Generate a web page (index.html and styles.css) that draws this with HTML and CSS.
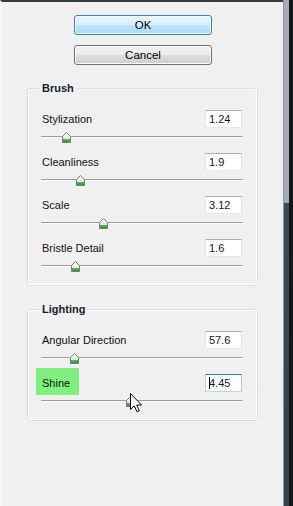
FILE: index.html
```html
<!DOCTYPE html>
<html>
<head>
<meta charset="utf-8">
<link rel="stylesheet" href="styles.css">
</head>
<body>
<div class="panel">
  <div class="buttons">
    <button class="btn btn-default">OK</button>
    <button class="btn">Cancel</button>
  </div>

  <fieldset class="group">
    <legend class="group-title">Brush</legend>
    <div class="rows">
      <div class="row">
        <div class="row-head"><span class="label">Stylization</span><span class="field">1.24</span></div>
        <div class="slider"><div class="track"></div><svg class="thumb" style="left:21px" width="9" height="11" viewBox="0 0 9 11"><defs><linearGradient id="g1" x1="0" y1="0" x2="0" y2="1"><stop offset="0" stop-color="#fdfdfd"/><stop offset="0.68" stop-color="#e2e4e2"/><stop offset="0.69" stop-color="#4cbc52"/><stop offset="1" stop-color="#2b8a31"/></linearGradient></defs><path d="M4.5 0.5 L8.5 4.5 L8.5 10.5 L0.5 10.5 L0.5 4.5 Z" fill="url(#g1)" stroke="#7a7a7a"/></svg></div>
      </div>
      <div class="row">
        <div class="row-head"><span class="label">Cleanliness</span><span class="field">1.9</span></div>
        <div class="slider"><div class="track"></div><svg class="thumb" style="left:35px" width="9" height="11" viewBox="0 0 9 11"><path d="M4.5 0.5 L8.5 4.5 L8.5 10.5 L0.5 10.5 L0.5 4.5 Z" fill="url(#g1)" stroke="#7a7a7a"/></svg></div>
      </div>
      <div class="row">
        <div class="row-head"><span class="label">Scale</span><span class="field">3.12</span></div>
        <div class="slider"><div class="track"></div><svg class="thumb" style="left:58px" width="9" height="11" viewBox="0 0 9 11"><path d="M4.5 0.5 L8.5 4.5 L8.5 10.5 L0.5 10.5 L0.5 4.5 Z" fill="url(#g1)" stroke="#7a7a7a"/></svg></div>
      </div>
      <div class="row">
        <div class="row-head"><span class="label">Bristle Detail</span><span class="field">1.6</span></div>
        <div class="slider"><div class="track"></div><svg class="thumb" style="left:30px" width="9" height="11" viewBox="0 0 9 11"><path d="M4.5 0.5 L8.5 4.5 L8.5 10.5 L0.5 10.5 L0.5 4.5 Z" fill="url(#g1)" stroke="#7a7a7a"/></svg></div>
      </div>
    </div>
  </fieldset>

  <fieldset class="group">
    <legend class="group-title">Lighting</legend>
    <div class="rows">
      <div class="row">
        <div class="row-head"><span class="label">Angular Direction</span><span class="field">57.6</span></div>
        <div class="slider"><div class="track"></div><svg class="thumb" style="left:29px" width="9" height="11" viewBox="0 0 9 11"><path d="M4.5 0.5 L8.5 4.5 L8.5 10.5 L0.5 10.5 L0.5 4.5 Z" fill="url(#g1)" stroke="#7a7a7a"/></svg></div>
      </div>
      <div class="row">
        <div class="row-head"><span class="label label-hl">Shine</span><span class="field field-focus"><span class="caret"></span>4.45</span></div>
        <div class="slider"><div class="track"></div><svg class="thumb" style="left:85px" width="9" height="11" viewBox="0 0 9 11"><path d="M4.5 0.5 L8.5 4.5 L8.5 10.5 L0.5 10.5 L0.5 4.5 Z" fill="url(#g1)" stroke="#7a7a7a"/></svg></div>
      </div>
    </div>
  </fieldset>
</div>
<div class="edge"><div class="e1"></div><div class="e2"></div><div class="e3"></div></div>

<svg class="cursor" width="13" height="20" viewBox="0 0 13 20"><path d="M0.5 0.5 L0.5 16.5 L4.3 12.9 L7 18.8 L9.3 17.8 L6.7 12 L11.5 12 Z" fill="#fff" stroke="#000" stroke-linejoin="miter"/></svg>
</body>
</html>
```

FILE: styles.css
```css
html, body {
  margin: 0;
  padding: 0;
}
body {
  width: 293px;
  height: 506px;
  overflow: hidden;
  display: flex;
  position: relative;
  background: #f0f0f0;
  font-family: "Liberation Sans", Arial, sans-serif;
  font-size: 11px;
  color: #111;
}
.panel {
  width: 283px;
  flex: none;
  box-sizing: border-box;
  border-top: 2px solid #363b41;
  border-left: 2px solid #f7f7f7;
  padding-top: 13px;
}
.buttons {
  display: flex;
  flex-direction: column;
  gap: 10px;
  margin-left: 72px;
  width: 138px;
}
.btn {
  height: 20px;
  box-sizing: border-box;
  margin: 0;
  padding: 0;
  font-family: "Liberation Sans", Arial, sans-serif;
  font-size: 11.5px;
  color: #000;
  border: 1px solid #707070;
  border-radius: 3px;
  background: linear-gradient(#f2f2f2 0%, #ebebeb 50%, #dddddd 51%, #cfcfcf 100%);
  box-shadow: inset 0 0 0 1px #fcfcfc;
}
.btn-default {
  border-color: #3c7fb1;
  background: linear-gradient(#eaf6fd 0%, #d9f0fc 50%, #bee6fd 51%, #a7d9f5 100%);
  box-shadow: inset 0 0 0 1px #f4fbff;
}
.group {
  margin: 17px 0 0 25px;
  padding: 0;
  width: 231px;
  box-sizing: border-box;
  min-inline-size: 0;
  border: 1px solid #d5dfe5;
  border-radius: 3px;
  box-shadow: inset 0 0 0 1px #ffffff;
}
.group-title {
  margin-left: 12px;
  padding: 0 2px;
  font-weight: bold;
  font-size: 11px;
  line-height: 13px;
  color: #15202e;
  background: #f0f0f0;
}
.rows {
  padding: 15px 0 3px;
  display: flex;
  flex-direction: column;
}
.row {
  height: 43px;
  display: flex;
  flex-direction: column;
}
.row-head {
  height: 18px;
  margin: 0 15px 0 14px;
  display: flex;
  justify-content: space-between;
  align-items: center;
}
.label {
  line-height: 13px;
  color: #111;
}
.label-hl {
  background: #80ef80;
  padding: 9px 9px 5px 6px;
  margin: -9px 0 -5px -6px;
  position: relative;
  z-index: 1;
}
.field {
  width: 37px;
  height: 18px;
  box-sizing: border-box;
  padding: 0 3px;
  display: flex;
  align-items: center;
  background: #fff;
  border: 1px solid;
  border-color: #abadb3 #dbdfe6 #e3e9ef #e2e3ea;
  color: #101828;
  font-size: 11px;
}
.field-focus {
  border-color: #3d7bad #a4c9e3 #b7d9ed #b5cfe7;
}
.caret {
  display: inline-block;
  width: 1px;
  height: 12px;
  background: #000;
  margin-right: -1px;
}
.slider {
  position: relative;
  height: 25px;
  margin: 0 14px 0 13px;
}
.track {
  margin-top: 8px;
  height: 1px;
  background: #9d9d9d;
  border-radius: 1px;
  box-shadow: 0 1px 0 #ffffff;
}
.thumb {
  position: absolute;
  top: 4px;
  display: block;
}
.edge {
  width: 10px;
  flex: none;
  display: flex;
}
.e1 {
  width: 1px;
  background: #8e959b;
}
.e2 {
  width: 5px;
  background: linear-gradient(#a5acb2 0, #a5acb2 203px, #3a4a57 203px, #33414d 100%);
}
.e3 {
  width: 4px;
  background: #14171a;
}
.cursor {
  position: absolute;
  left: 130px;
  top: 393px;
  display: block;
}
```
